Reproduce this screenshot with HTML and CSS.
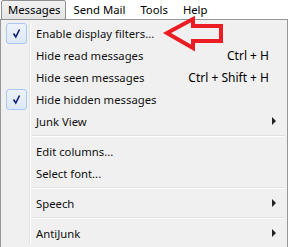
FILE: index.html
```html
<!DOCTYPE html>
<html>
<head>
<meta charset="utf-8">
<title>Messages menu</title>
<link rel="stylesheet" href="styles.css">
</head>
<body>
<div class="menubar">
  <span class="top open">Messages</span>
  <span class="top">Send Mail</span>
  <span class="top">Tools</span>
  <span class="top">Help</span>
</div>

<div class="dropdown">
  <div class="item">
    <span class="gutter"><span class="check"><svg width="19" height="19" viewBox="0 0 19 19"><path d="M6.5 9.5 L8.8 13 L12.5 5.5" fill="none" stroke="#0e1f78" stroke-width="1.6"/></svg></span></span>
    <span class="label">Enable display filters...</span>
  </div>
  <div class="item">
    <span class="gutter"></span>
    <span class="label">Hide read messages</span>
    <span class="key">Ctrl + H</span>
  </div>
  <div class="item">
    <span class="gutter"></span>
    <span class="label">Hide seen messages</span>
    <span class="key">Ctrl + Shift + H</span>
  </div>
  <div class="item">
    <span class="gutter"><span class="check"><svg width="19" height="19" viewBox="0 0 19 19"><path d="M6.5 9.5 L8.8 13 L12.5 5.5" fill="none" stroke="#0e1f78" stroke-width="1.6"/></svg></span></span>
    <span class="label">Hide hidden messages</span>
  </div>
  <div class="item">
    <span class="gutter"></span>
    <span class="label">Junk View</span>
    <span class="sub"></span>
  </div>
  <div class="sep"><span class="gutter"></span><span class="line"></span></div>
  <div class="item">
    <span class="gutter"></span>
    <span class="label">Edit columns...</span>
  </div>
  <div class="item">
    <span class="gutter"></span>
    <span class="label">Select font...</span>
  </div>
  <div class="sep"><span class="gutter"></span><span class="line"></span></div>
  <div class="item">
    <span class="gutter"></span>
    <span class="label">Speech</span>
    <span class="sub"></span>
  </div>
  <div class="sep"><span class="gutter"></span><span class="line"></span></div>
  <div class="item">
    <span class="gutter"></span>
    <span class="label">AntiJunk</span>
    <span class="sub"></span>
  </div>
</div>

<svg class="pointer" width="289" height="60" viewBox="0 0 289 60">
  <polygon points="167,33 193,19 193,26 221,26 221,41 193,41 193,48"
           fill="none" stroke="#ec1c24" stroke-width="4" stroke-linejoin="miter"/>
</svg>
</body>
</html>
```

FILE: styles.css
```css
body {
   margin: 0;
   width: 289px;
   height: 247px;
   overflow: hidden;
   background: white;
   font-family: 'Noto Sans', 'Open Sans', sans-serif;
   font-size: 11.3px;
   color: #000;
   position: relative;
}

.menubar {
   display: flex;
   height: 19px;
   background: #fff;
   padding-left: 1px;
}

.top {
   display: flex;
   align-items: center;
   padding: 0 6px 0 7px;
   height: 18px;
   line-height: 18px;
   border: 1px solid transparent;
}

.top.open {
   border-color: #8e8f8f;
   border-radius: 2px;
   background: linear-gradient(#f2f2f2, #e4e4e4);
   padding: 0 4px 0 6px;
}

.dropdown {
   width: 286px;
   height: 225px;
   border: 1px solid #979797;
   background: #f0f0f0;
   padding: 2px 0 0 0;
   box-sizing: content-box;
}

.item {
   display: flex;
   align-items: center;
   height: 22px;
}

.gutter {
   width: 28px;
   height: 100%;
   display: flex;
   align-items: center;
   justify-content: center;
   border-right: 1px solid #e2e3e3;
   box-shadow: 1px 0 0 #fff;
   margin-right: 6px;
   flex: none;
}

.check {
   width: 19px;
   height: 19px;
   margin-left: 2px;
   border: 1px solid #a8c8f0;
   border-radius: 3px;
   background: linear-gradient(#eef3fb, #dde8f8);
   display: flex;
}

.label {
   flex: 1;
   color: #101010;
}

.key {
   font-size: 12px;
   margin-right: 18px;
}

.sub {
   width: 0;
   height: 0;
   border-top: 4px solid transparent;
   border-bottom: 4px solid transparent;
   border-left: 4px solid #222;
   margin-right: 11px;
}

.sep {
   display: flex;
   height: 8px;
   align-items: center;
}

.sep .gutter {
   margin-right: 2px;
}

.line {
   flex: 1;
   height: 1px;
   border-bottom: 1px solid #fff;
   background: #e0e0e0;
   margin-right: 2px;
}

.pointer {
   position: absolute;
   left: 0;
   top: 0;
}
```
